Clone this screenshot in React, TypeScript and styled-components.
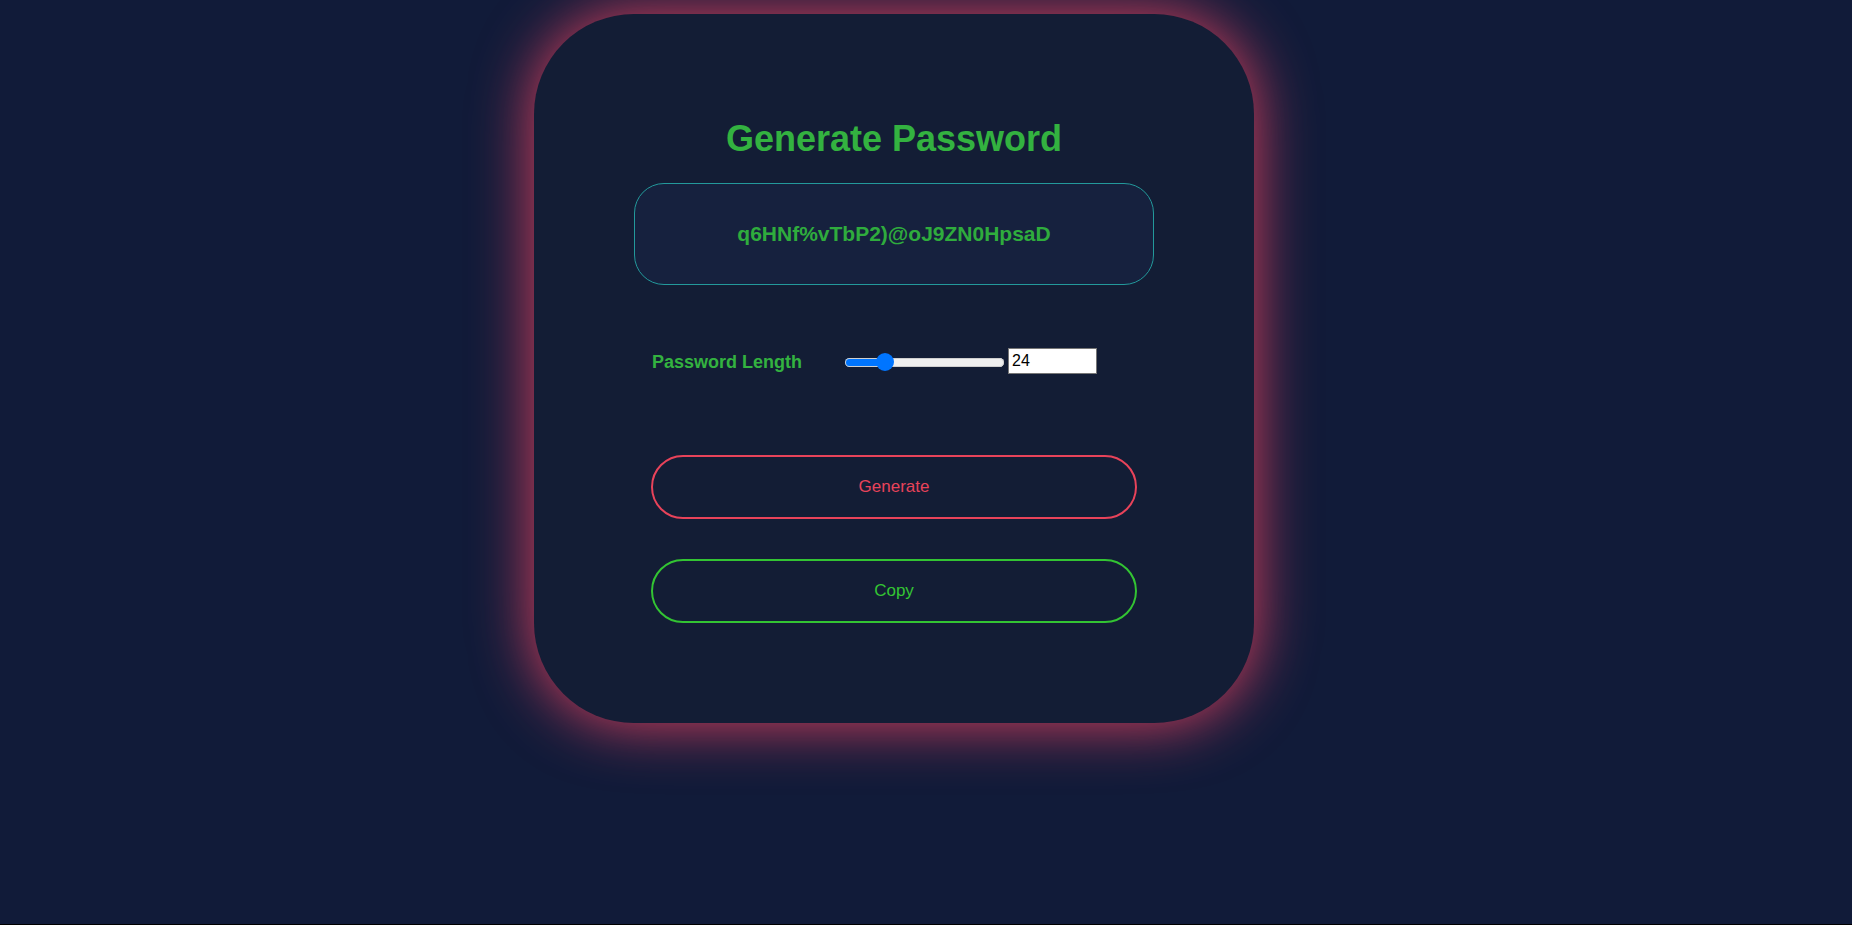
import React, { useState } from "react";
import styled, { createGlobalStyle } from "styled-components";

const GlobalStyle = createGlobalStyle`
  html {
    background: #000;
  }
  body {
    margin: 0;
    height: 924px;
    background: #111b39;
    font-family: "Liberation Sans", Arial, sans-serif;
    overflow: hidden;
  }
`;

const Page = styled.div`
  display: flex;
  justify-content: center;
  padding: 14px 64px 0 0;
`;

const Card = styled.div`
  width: 720px;
  height: 709px;
  box-sizing: border-box;
  background: #131d35;
  border-radius: 100px;
  box-shadow: 0 0 60px #e0415f;
  display: flex;
  flex-direction: column;
  align-items: center;
  padding-top: 104px;
`;

const Title = styled.h1`
  margin: 0;
  font-size: 36px;
  line-height: 42px;
  font-weight: 700;
  color: #33b240;
`;

const Display = styled.div`
  margin-top: 23px;
  width: 520px;
  height: 102px;
  box-sizing: border-box;
  border: 1px solid #23999b;
  border-radius: 30px;
  background: #16213e;
  display: flex;
  align-items: center;
  justify-content: center;
  color: #2fac3d;
  font-size: 21px;
  font-weight: 700;
`;

const Row = styled.div`
  margin-top: 63px;
  width: 486px;
  height: 26px;
  display: flex;
  align-items: center;
`;

const Label = styled.label`
  color: #33b240;
  font-size: 18px;
  font-weight: 700;
  margin-left: 1px;
  padding-top: 3px;
  width: 193px;
`;

const Range = styled.input`
  -webkit-appearance: none;
  appearance: none;
  width: 159px;
  height: 9px;
  margin: 2px 4px 0 0;
  border-radius: 5px;
  background: linear-gradient(
    to right,
    #0075ff 0,
    #0075ff var(--fill),
    #efefef var(--fill),
    #efefef 100%
  );
  box-shadow: inset 0 0 0 1px #cfcfcf;
  outline: none;
  &::-webkit-slider-thumb {
    -webkit-appearance: none;
    appearance: none;
    width: 18px;
    height: 18px;
    border-radius: 50%;
    background: #0075ff;
    border: none;
  }
`;

const NumberBox = styled.input`
  width: 89px;
  height: 26px;
  box-sizing: border-box;
  font-family: "Liberation Sans", Arial, sans-serif;
  font-size: 16px;
  color: #000;
  background: #fff;
  border: 1px solid #767676;
  padding: 1px 3px;
  &::-webkit-inner-spin-button,
  &::-webkit-outer-spin-button {
    -webkit-appearance: none;
    margin: 0;
  }
`;

const Button = styled.button<{ $tone: string; $gap: number }>`
  margin-top: ${(p) => p.$gap}px;
  width: 486px;
  height: 64px;
  border-radius: 32px;
  border: 2px solid ${(p) => p.$tone};
  background: transparent;
  color: ${(p) => p.$tone};
  font-family: "Liberation Sans", Arial, sans-serif;
  font-size: 17px;
  cursor: pointer;
`;

const MIN = 8;
const MAX = 80;

export default function App() {
  const [len, setLen] = useState(24);
  const frac = (len - MIN) / (MAX - MIN);
  const fillPx = 9 + frac * (159 - 18);
  return (
    <>
      <GlobalStyle />
      <Page>
        <Card>
          <Title>Generate Password</Title>
          <Display>q6HNf%vTbP2)@oJ9ZN0HpsaD</Display>
          <Row>
            <Label>Password Length</Label>
            <Range
              type="range"
              min={MIN}
              max={MAX}
              value={len}
              style={{ ["--fill" as string]: `${fillPx}px` } as React.CSSProperties}
              onChange={(e) => setLen(Number(e.target.value))}
            />
            <NumberBox
              type="number"
              value={len}
              onChange={(e) => setLen(Number(e.target.value))}
            />
          </Row>
          <Button $tone="#e8435a" $gap={81}>Generate</Button>
          <Button $tone="#33c433" $gap={40}>Copy</Button>
        </Card>
      </Page>
    </>
  );
}
